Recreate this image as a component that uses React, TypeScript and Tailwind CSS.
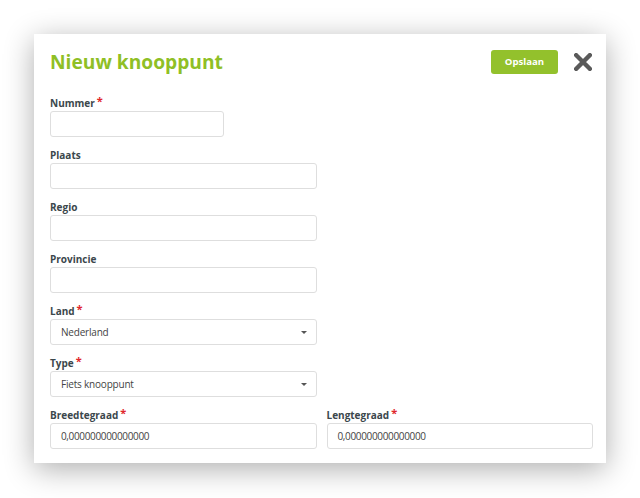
const font = { fontFamily: '"Open Sans", "Liberation Sans", sans-serif' }

const Label = ({ text, required }: { text: string; required?: boolean }) => (
  <div className="flex h-[16px] items-start text-[10px] font-bold leading-[16px] text-[#3b474c]">
    {text}
    {required && <span className="ml-[2px] -mt-[2px] text-[11px] leading-[16px] text-[#e0262b]">*</span>}
  </div>
)

const Input = ({ value, className = "" }: { value?: string; className?: string }) => (
  <div
    className={`flex h-[26px] items-center rounded-[3px] border border-[#dedede] bg-white px-[10px] text-[10px] tracking-[-0.35px] text-[#444] ${className}`}
  >
    {value}
  </div>
)

const Select = ({ value }: { value: string }) => (
  <div className="flex h-[26px] w-[267px] items-center justify-between rounded-[3px] border border-[#dedede] bg-white pl-[10px] pr-[9px] text-[10px] tracking-[-0.2px] text-[#444]">
    <span>{value}</span>
    <span className="h-0 w-0 border-x-[3px] border-t-[3px] border-x-transparent border-t-[#555]" />
  </div>
)

const Field = ({ label, required, children }: { label: string; required?: boolean; children: React.ReactNode }) => (
  <div className="flex flex-col">
    <Label text={label} required={required} />
    {children}
  </div>
)

export default function App() {
  return (
    <div className="h-[498px] w-[640px] bg-white pl-[34px] pt-[34px]" style={font}>
      <div className="flex h-[429px] w-[572px] flex-col bg-white pb-[15px] pl-[16px] pr-[13px] pt-[16px] shadow-[0_6px_28px_rgba(0,0,0,0.32)]">
        <div className="flex h-[24px] items-center justify-between">
          <h1 className="text-[19.2px] font-bold leading-none text-[#8fbf26]">Nieuw knooppunt</h1>
          <div className="flex items-center gap-[16px]">
            <button className="flex h-[24px] w-[67px] items-center justify-center rounded-[3px] bg-[#93c12c] text-[9.6px] font-bold text-white">
              Opslaan
            </button>
            <svg width="18" height="18" viewBox="0 0 18 18" className="mr-px">
              <path d="M2.2 2.2 L15.8 15.8 M15.8 2.2 L2.2 15.8" stroke="#5a5a5a" strokeWidth="4.4" strokeLinecap="square" />
            </svg>
          </div>
        </div>
        <div className="mt-[21px] flex flex-col gap-[10px]">
          <Field label="Nummer" required>
            <Input className="w-[174px]" />
          </Field>
          <Field label="Plaats">
            <Input className="w-[267px]" />
          </Field>
          <Field label="Regio">
            <Input className="w-[267px]" />
          </Field>
          <Field label="Provincie">
            <Input className="w-[267px]" />
          </Field>
          <Field label="Land" required>
            <Select value="Nederland" />
          </Field>
          <Field label="Type" required>
            <Select value="Fiets knooppunt" />
          </Field>
          <div className="grid grid-cols-2 gap-[10px]">
            <Field label="Breedtegraad" required>
              <Input value="0,000000000000000" />
            </Field>
            <Field label="Lengtegraad" required>
              <Input value="0,000000000000000" />
            </Field>
          </div>
        </div>
      </div>
    </div>
  )
}
